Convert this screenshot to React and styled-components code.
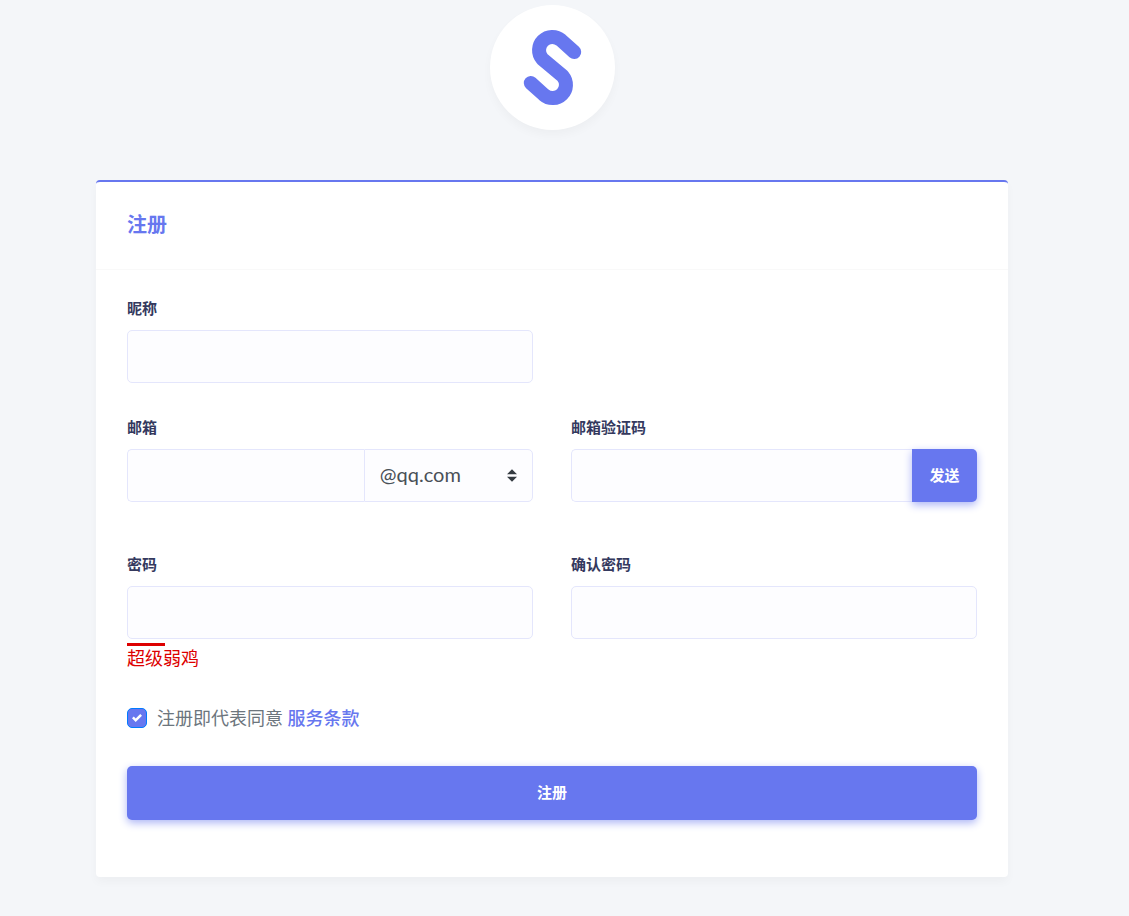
import React from "react";
import styled, { createGlobalStyle, css } from "styled-components";

const GlobalStyle = createGlobalStyle`
  *, *::before, *::after {
    box-sizing: border-box;
  }
  body {
    margin: 0;
    background-color: #f4f6f9;
    color: #6c757d;
    font-family: Lato, "Noto Sans CJK SC", sans-serif;
    font-size: 18px;
    line-height: 24px;
  }
  input, select, button {
    margin: 0;
    font-family: inherit;
  }
`;

const Page = styled.main`
  display: flex;
  flex-direction: column;
  gap: 50px;
  padding: 5px 121px 38px 96px;
`;

const Brand = styled.div`
  align-self: center;
  width: 125px;
  height: 125px;
  border-radius: 50%;
  background-color: #fff;
  box-shadow: 0 5px 10px rgba(0, 0, 0, 0.03);

  svg {
    display: block;
  }
`;

const Card = styled.section`
  border-top: 2px solid #6777ef;
  border-radius: 4px;
  background-color: #fff;
  box-shadow: 0 5px 10px rgba(0, 0, 0, 0.03);
`;

const CardHeader = styled.header`
  padding: 28px 31px 30px;
  border-bottom: 1px solid #f9f9f9;
`;

const Title = styled.h4`
  margin: 0;
  color: #6777ef;
  font-size: 20px;
  font-weight: 700;
  line-height: 29px;
`;

const Form = styled.form`
  padding: 26px 31px 57px;
`;

const Row = styled.div`
  display: grid;
  grid-template-columns: 1fr 1fr;
  gap: 38px;
  margin-bottom: ${(props) => props.$space}px;
`;

const Field = styled.div`
  min-width: 0;
`;

const Label = styled.label`
  display: block;
  margin-bottom: 10px;
  color: #34395e;
  font-size: 15px;
  font-weight: 700;
`;

const control = css`
  width: 100%;
  height: 53px;
  border: 1px solid #e4e6fc;
  border-radius: 5px;
  background-color: #fdfdff;
  color: #495057;
  outline: none;

  &:focus {
    border-color: #95a0f4;
  }
`;

const Input = styled.input`
  ${control}
  min-width: 0;
  padding: 12px 18px;
  font-size: 18px;
`;

const InputGroup = styled.div`
  display: flex;

  ${Input} {
    flex: 1;
    border-right: 0;
    border-radius: 5px 0 0 5px;
  }
`;

const SelectWrap = styled.div`
  position: relative;
  flex: none;
  width: calc(100% * 5 / 12);

  svg {
    position: absolute;
    top: 20px;
    right: 16px;
    pointer-events: none;
  }
`;

const Select = styled.select`
  ${control}
  display: block;
  padding: 0 35px 4px 15px;
  border-radius: 0 5px 5px 0;
  font-size: 20px;
  appearance: none;
`;

const Button = styled.button`
  padding: 0 16px 3px;
  border: 0;
  border-radius: 5px;
  background-color: #6777ef;
  box-shadow: 0 3px 8px #acb5f6;
  color: #fff;
  font-size: 15px;
  font-weight: 700;
  cursor: pointer;
`;

const SendButton = styled(Button)`
  flex: none;
  min-width: 65px;
  border-radius: 0 5px 5px 0;
`;

const SubmitButton = styled(Button)`
  display: block;
  width: 100%;
  height: 54px;
`;

const Strength = styled.div`
  margin-top: 4px;
  color: #dd0000;

  &::before {
    content: "";
    display: block;
    width: 38px;
    height: 3px;
    background-color: #dd0000;
  }
`;

const Agreement = styled.div`
  display: flex;
  align-items: center;
  gap: 10px;
  margin-bottom: 36px;
`;

const CheckWrap = styled.span`
  display: grid;
  flex: none;
  place-items: center;

  > * {
    grid-area: 1 / 1;
  }
  svg {
    pointer-events: none;
  }
`;

const Checkbox = styled.input`
  width: 20px;
  height: 20px;
  border: 1px solid #adb5bd;
  border-radius: 5px;
  background-color: #fff;
  appearance: none;

  &:checked {
    border-color: #007bff;
    background-color: #6777ef;
  }
`;

const Link = styled.a`
  color: #6777ef;
  font-weight: 500;
  text-decoration: none;
`;

function Logo() {
  return (
    <svg width="125" height="125" viewBox="0 0 125 125" fill="none" aria-hidden="true">
      <path
        d="M84.2 47L71 35.1A13.3 13.3 0 0 0 52.2 53.8L72.8 71.2A13.3 13.3 0 0 1 54 89.9L40.8 78"
        stroke="#6777ef"
        strokeWidth="14"
        strokeLinecap="round"
        strokeLinejoin="round"
      />
    </svg>
  );
}

export default function App() {
  return (
    <>
      <GlobalStyle />
      <Page>
        <Brand>
          <Logo />
        </Brand>
        <Card>
          <CardHeader>
            <Title>注册</Title>
          </CardHeader>
          <Form onSubmit={(e) => e.preventDefault()}>
            <Row $space={32}>
              <Field>
                <Label htmlFor="nickname">昵称</Label>
                <Input id="nickname" type="text" />
              </Field>
            </Row>
            <Row $space={50}>
              <Field>
                <Label id="email-label" htmlFor="email">邮箱</Label>
                <InputGroup>
                  <Input id="email" type="text" />
                  <SelectWrap>
                    <Select aria-labelledby="email-label">
                      <option>@qq.com</option>
                    </Select>
                    <svg width="10" height="13" viewBox="0 0 4 5" aria-hidden="true">
                      <path d="M2 0L0 2h4zm0 5L0 3h4z" fill="#343a40" />
                    </svg>
                  </SelectWrap>
                </InputGroup>
              </Field>
              <Field>
                <Label htmlFor="code">邮箱验证码</Label>
                <InputGroup>
                  <Input id="code" type="text" />
                  <SendButton type="button">发送</SendButton>
                </InputGroup>
              </Field>
            </Row>
            <Row $space={36}>
              <Field>
                <Label htmlFor="password">密码</Label>
                <Input id="password" type="password" />
                <Strength>超级弱鸡</Strength>
              </Field>
              <Field>
                <Label htmlFor="confirm">确认密码</Label>
                <Input id="confirm" type="password" />
              </Field>
            </Row>
            <Agreement>
              <CheckWrap>
                <Checkbox id="agree" type="checkbox" defaultChecked />
                <svg width="10" height="10" viewBox="0 0 8 8" aria-hidden="true">
                  <path
                    d="M6.564.75l-3.59 3.612-1.538-1.55L0 4.26 2.974 7.25 8 2.193z"
                    fill="#fff"
                  />
                </svg>
              </CheckWrap>
              <span>
                <label htmlFor="agree">注册即代表同意</label> <Link href="#terms">服务条款</Link>
              </span>
            </Agreement>
            <SubmitButton type="submit">注册</SubmitButton>
          </Form>
        </Card>
      </Page>
    </>
  );
}
